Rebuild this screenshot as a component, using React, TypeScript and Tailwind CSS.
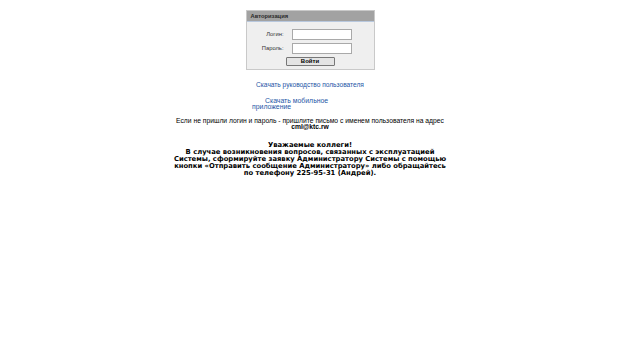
import React from "react";

const sans = { fontFamily: '"Liberation Sans", Arial, sans-serif' };

const LoginBox: React.FC = () => {
  return (
    <div className="w-[129px] border border-[#c9c9c9] bg-[#efefef]">
      <div className="h-[11px] border-b border-[#b8c8de] bg-[#a2a2a2] pl-[4px] text-[5.8px] leading-[11px] font-bold text-[#2a2a2a]">
        Авторизация
      </div>
      <div className="grid grid-cols-[39px_60px] items-center gap-x-[6px] gap-y-[3px] pt-[7px]">
        <div className="pr-[2px] text-right text-[5.8px] text-[#333]">Логин:</div>
        <input className="h-[11px] w-[60px] border border-[#a9a9a9] bg-white outline-none" />
        <div className="pr-[2px] text-right text-[5.8px] text-[#333]">Пароль:</div>
        <input
          type="password"
          className="h-[11px] w-[60px] border border-[#a9a9a9] bg-white outline-none"
        />
      </div>
      <div className="flex justify-center pt-[3px] pb-[3px]">
        <button className="h-[9px] w-[49px] rounded-[1px] border border-[#777] bg-[#e4e4e4] text-[6px] leading-[7px] font-bold text-black">
          Войти
        </button>
      </div>
    </div>
  );
};

export default function App() {
  return (
    <div className="h-[343px] w-[620px] bg-white" style={sans}>
      <div className="flex flex-col items-center pt-[10px]">
        <LoginBox />

        <a className="mt-[11px] text-[6.6px] leading-[7px] text-[#1d55a6]">
          Скачать руководство пользователя
        </a>

        <div
          className="mt-[10px] w-[84px] text-left text-[6.9px] leading-[6px] text-[#1d55a6]"
          style={{ marginLeft: "-32px" }}
        >
          <span className="inline-block w-[13px]" />
          Скачать мобильное приложение
        </div>

        <div className="mt-[8px] text-center text-[6.75px] leading-[6px] text-black">
          Если не пришли логин и пароль - пришлите письмо с именем пользователя на адрес
          <br />
          <b>cml@ktc.rw</b>
        </div>

        <div
          className="mt-[12px] text-center text-[6.8px] leading-[7px] font-bold text-black"
          style={{ fontFamily: '"DejaVu Sans", Verdana, sans-serif' }}
        >
          Уважаемые коллеги!
          <br />
          В случае возникновения вопросов, связанных с эксплуатацией
          <br />
          Системы, сформируйте заявку Администратору Системы с помощью
          <br />
          кнопки «Отправить сообщение Администратору» либо обращайтесь
          <br />
          по телефону 225-95-31 (Андрей).
        </div>
      </div>
    </div>
  );
}
